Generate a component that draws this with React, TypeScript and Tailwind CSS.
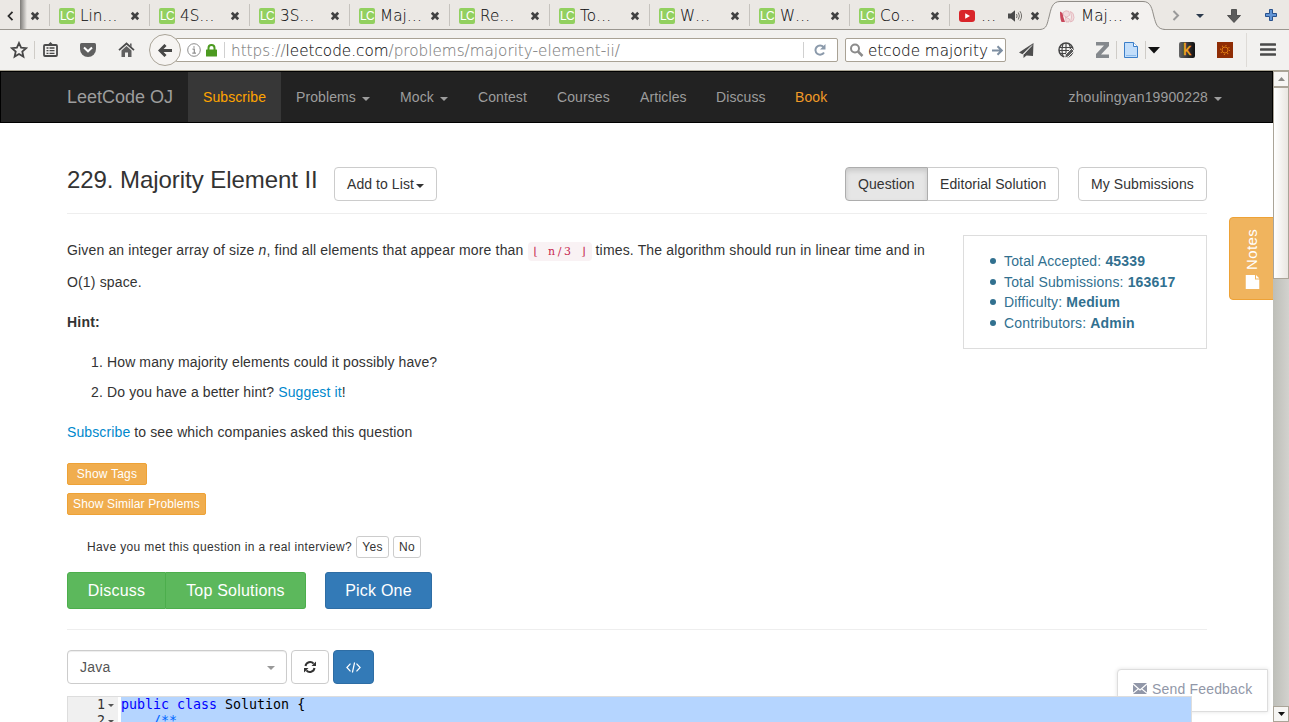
import React from "react";

const CHROME_TEXT = "font-['DejaVu_Sans_Light','DejaVu_Sans',sans-serif] text-[15.22px] font-extralight text-[#111] [-webkit-text-stroke:0.1px]";

function CloseMark() {
  return (
    <svg width="10" height="10" viewBox="0 0 10 10" className="shrink-0">
      <path d="M1.8 1.8 8.2 8.2M8.2 1.8 1.8 8.2" stroke="#414141" strokeWidth="2.7" />
    </svg>
  );
}

function Favicon() {
  return (
    <span className="flex h-4 w-4 shrink-0 items-center justify-center rounded-[2px] bg-[#92d05f] font-['Liberation_Sans',sans-serif] text-[12px] leading-4 tracking-[-0.6px] text-white">
      LC
    </span>
  );
}

function Tab({ title }: { title: string }) {
  return (
    <div className="flex h-[29px] w-[100px] shrink-0 items-center pt-[3px]">
      <span className="-mt-[2px] h-[22px] w-px bg-[#c6c3be]" />
      <span className="ml-[9px]"><Favicon /></span>
      <span className={`ml-[5px] w-[50px] whitespace-nowrap leading-5 ${CHROME_TEXT}`}>{title}</span>
      <CloseMark />
    </div>
  );
}

function Caret({ className = "" }: { className?: string }) {
  return (
    <svg width="8" height="4" viewBox="0 0 8 4" className={`inline-block shrink-0 ${className}`}>
      <path d="M0 0h8L4 4z" fill="currentColor" />
    </svg>
  );
}

function TabStrip() {
  return (
    <div className="relative flex h-[30px] border-b border-[#9a968f] bg-[#ebe8e4]">
      <div className="flex w-[49px] shrink-0 items-center pt-[3px]">
        <svg width="7" height="10" viewBox="0 0 7 10" className="ml-[7px]">
          <path d="M5.5 .8 1.5 5l4 4.2" fill="none" stroke="#2b2b2b" strokeWidth="1.8" />
        </svg>
        <span className="-mt-[3px] ml-[6px] h-[29px] w-[7px] bg-gradient-to-r from-[#7d7b78] to-[#ebe8e4]" />
        <span className="ml-[3px]"><CloseMark /></span>
      </div>
      {["Lin…", "4S…", "3S…", "Maj…", "Re…", "To…", "W…", "W…", "Co…"].map((t, i) => (
        <Tab key={i} title={t} />
      ))}
      <div className="flex w-[91px] shrink-0 items-center pt-[3px]">
        <span className="-mt-[2px] h-[22px] w-px bg-[#c6c3be]" />
        <svg width="16" height="12" viewBox="0 0 16 12" className="ml-[9px]">
          <rect width="16" height="12" rx="3" fill="#d9252a" />
          <path d="M6.2 3.3v5.4L11 6z" fill="#fff" />
        </svg>
        <span className={`ml-[6px] w-[27px] leading-5 ${CHROME_TEXT}`}>…</span>
        <svg width="15" height="12" viewBox="0 0 15 12">
          <path d="M0 3.5h3L7 .3v11.4L3 8.500H0z" fill="#4a4a4a" />
          <path d="M8.500 4q1.200 2 0 4M10.300 2.500q2.200 3.500 0 7M12 1.200q3.100 4.800 0 9.600" fill="none" stroke="#6f6d69" />
        </svg>
        <span className="ml-[7px]"><CloseMark /></span>
      </div>
      <div className="relative flex w-[125px] shrink-0">
        <svg width="125" height="30" viewBox="0 0 125 30" className="absolute left-0 top-0">
          <path d="M0 30V29.500C7 29 7 24 9 17C11 9 12 1.500 20 1.500H103C111 1.500 112 9 114 17C116 24 117 29 125 29.500V30z" fill="#f3f1ef" />
          <path d="M0 29.500C7 29 7 24 9 17C11 9 12 1.500 20 1.500H103C111 1.500 112 9 114 17C116 24 117 29 125 29.500" fill="none" stroke="#8f8c87" />
        </svg>
        <div className="relative flex items-center pt-[3px] pl-[20px]">
          <svg width="15" height="13" viewBox="0 0 15 13">
            <path d="M0 1.500 2.500 3l.8 4L5 12H1.500Q0 9 0 1.500z" fill="#c9475b" />
            <path d="M3 2.500Q6-.5 9 1.500l.5 4-3 1.500-3-1.500zM5.500 7l4 2-.5 3H6zM10.500 1.500q3.500 1 3.500 6 0 4-3.500 4.500l1-5z" fill="#f1dcde" stroke="#dfa9b0" strokeWidth=".7" />
          </svg>
          <span className={`ml-[6px] w-[49px] whitespace-nowrap leading-5 ${CHROME_TEXT}`}>Maj…</span>
          <CloseMark />
        </div>
      </div>
      <div className="flex flex-1 items-center pt-[2px]">
        <svg width="8" height="11" viewBox="0 0 8 11" className="ml-[7px]">
          <path d="M1.500 1 6 5.500 1.500 10" fill="none" stroke="#999" strokeWidth="2" />
        </svg>
        <Caret className="ml-[16px] text-[#2c3a4c]" />
        <svg width="14" height="14" viewBox="0 0 14 14" className="ml-[23px]">
          <path d="M4.500.5h5v6h4L7 13.500.5 6.500h4z" fill="#5c5c5c" stroke="#3f3f3f" strokeWidth=".8" />
        </svg>
        <svg width="12" height="12" viewBox="0 0 12 12" className="-mt-px ml-[24px]">
          <path d="M4.500.5h3v4h4v3h-4v4h-3v-4h-4v-3h4z" fill="#6295d6" stroke="#28518c" />
        </svg>
      </div>
    </div>
  );
}

function Toolbar() {
  return (
    <div className="flex h-[41px] items-center border-b border-[#a9a494] bg-[#f2f1ef]">
      <svg width="18" height="18" viewBox="0 0 18 18" className="ml-[10px]">
        <path d="M9 2l2.100 4.700 5 .5-3.800 3.400 1.100 5L9 13l-4.400 2.600 1.100-5L1.900 7.200l5-.5z" fill="none" stroke="#474747" strokeWidth="1.800" />
      </svg>
      <span className="ml-[6px] h-[18px] w-px bg-[#cfccc7]" />
      <svg width="15" height="15" viewBox="0 0 15 15" className="-mt-px ml-[8px]">
        <rect x="1" y="3" width="13" height="11" rx="1" fill="none" stroke="#4a4a4a" strokeWidth="1.800" />
        <path d="M4 3.500 7.500 0 11 3.500z" fill="#4a4a4a" />
        <path d="M3.500 6h2M6.500 6h5M3.500 8.700h2M6.500 8.700h5M3.500 11.400h2M6.500 11.400h5" stroke="#4a4a4a" strokeWidth="1.300" />
      </svg>
      <svg width="16" height="14" viewBox="0 0 16 14" className="ml-[22px]">
        <path d="M1.500 0h13Q16 0 16 1.500V6a8 8 0 0 1-16 0V1.500Q0 0 1.500 0z" fill="#606060" />
        <path d="M4 4.500 8 8.300l4-3.800" fill="none" stroke="#fff" strokeWidth="2" />
      </svg>
      <svg width="17" height="15" viewBox="0 0 17 15" className="-mt-px ml-[22px]">
        <path d="M1 8.200 8.500 1.500 16 8.200" fill="none" stroke="#4a4a4a" strokeWidth="1.700" />
        <path d="M3.500 8.500 8.500 4l5 4.500V15h-3.500v-4.500h-3V15H3.500zM12 1.500h1.600V5L12 3.500z" fill="#606060" />
      </svg>
      <div className="z-10 ml-[14px] flex h-8 w-8 shrink-0 items-center justify-center rounded-full border border-[#aaa498] bg-[#f6f4f2]">
        <svg width="14" height="13" viewBox="0 0 14 13">
          <path d="M7.500 1 2 6.500 7.500 12M2.500 6.500H14" fill="none" stroke="#474747" strokeWidth="3" />
        </svg>
      </div>
      <div className="-ml-[5px] flex h-6 w-[662px] items-center rounded-r-[2px] border border-[#a9a295] bg-white">
        <svg width="14" height="14" viewBox="0 0 14 14" className="ml-[10px]">
          <circle cx="7" cy="7" r="6.300" fill="none" stroke="#8d8d8d" />
          <path d="M7 3.200v1.600M5.500 6.200H7.300v4M5.300 10.200h3.700" fill="none" stroke="#8d8d8d" strokeWidth="1.200" />
        </svg>
        <svg width="11" height="13" viewBox="0 0 11 13" className="ml-[5px]">
          <path d="M2.500 7V4a3 3 0 0 1 6 0v3" fill="none" stroke="#4c9a20" strokeWidth="2" />
          <rect y="5.500" width="11" height="7" rx=".5" fill="#4c9a20" />
        </svg>
        <span className="ml-[7px] h-4 w-px bg-[#d0d0d0]" />
        <span className={`ml-[6px] flex-1 whitespace-nowrap pt-px leading-5 ${CHROME_TEXT}`}>
          <span className="text-[#7d7d7d]">https://</span>leetcode.com<span className="text-[#7d7d7d]">/problems/majority-element-ii/</span>
        </span>
        <span className="h-4 w-px bg-[#d0d0d0]" />
        <svg width="12" height="12" viewBox="0 0 12 12" className="ml-[10px] mr-[11px]">
          <path d="M9.500 3A4.600 4.600 0 1 0 10 8.500" fill="none" stroke="#8b9aab" strokeWidth="2" />
          <path d="M11.500 0v5.500H6z" fill="#8b9aab" />
        </svg>
      </div>
      <div className="ml-[7px] flex h-6 w-[161px] shrink-0 items-center rounded-[2px] border border-[#a9a295] bg-white">
        <svg width="15" height="14" viewBox="0 0 15 14" className="ml-[3px]">
          <circle cx="6" cy="5.500" r="4" fill="none" stroke="#8b8b8b" strokeWidth="2" />
          <path d="M9 8.500 13.500 13" stroke="#8b8b8b" strokeWidth="2.500" />
        </svg>
        <span className={`ml-[4px] w-[120px] whitespace-nowrap pt-px leading-5 ${CHROME_TEXT}`}>etcode majority</span>
        <svg width="11" height="11" viewBox="0 0 11 11" className="ml-[4px]">
          <path d="M0 5.500h9M5.500 1.200 9.800 5.500 5.500 9.800" fill="none" stroke="#7d8ea1" strokeWidth="2" />
        </svg>
      </div>
      <svg width="15" height="15" viewBox="0 0 15 15" className="ml-[13px]">
        <path d="M14.500 0 0 9.500l3.500 1.700zM14.500 0 4.500 11.500V15l3-2.500L14 13z" fill="#4e4e4e" />
        <path d="M13 2.500 4.500 11.500" stroke="#ddd" />
      </svg>
      <svg width="16" height="16" viewBox="0 0 16 16" className="ml-[24px]">
        <circle cx="8" cy="8" r="7" fill="none" stroke="#444" strokeWidth="1.500" />
        <path d="M1 5.500h14M1 8.500h12M2 11.500h9M5 2q-2 6 0 12M8 1v13M11 2q2 3 1.500 7" fill="none" stroke="#444" strokeWidth="1.100" />
        <path d="M6.500 16 7.500 12.500 13.500 6.500 16 9 10 15z" fill="#5a5a5a" stroke="#f2f1ef" strokeWidth="1" />
      </svg>
      <svg width="13" height="16" viewBox="0 0 13 16" className="ml-[22px]">
        <path d="M0 0h13v4L5 12.500h8V16H0v-4L8 3.500H0z" fill="#85898d" />
      </svg>
      <span className="ml-[7px] h-[18px] w-px bg-[#cfccc7]" />
      <svg width="14" height="16" viewBox="0 0 14 16" className="ml-[7px]">
        <path d="M.5.5h9l4 4v11H.5z" fill="#c3defa" stroke="#3c7fc9" />
        <path d="M9.500.5v4h4" fill="#fff" stroke="#3c7fc9" />
        <path d="M2 13.500h10" stroke="#8dbcec" strokeWidth="1" />
      </svg>
      <span className="ml-[7px] h-[18px] w-px bg-[#cfccc7]" />
      <svg width="12" height="7" viewBox="0 0 12 7" className="ml-[2px]"><path d="M0 0h12L6 6.500z" fill="#111" /></svg>
      <span className="ml-[19px] flex h-4 w-4 items-center justify-center rounded-[2px] bg-gradient-to-r from-[#666] to-[#111] font-['Liberation_Sans',sans-serif] text-[16px] leading-4 text-[#f7a61c] [-webkit-text-stroke:0.3px]">k</span>
      <svg width="16" height="16" viewBox="0 0 16 16" className="ml-[22px]">
        <rect width="16" height="16" fill="#8f2d05" />
        <circle cx="8" cy="8" r="3" fill="none" stroke="#e88514" strokeWidth=".9" />
        <circle cx="8" cy="8" r="4.500" fill="none" stroke="#e88514" strokeWidth="1.100" strokeDasharray="1 2.530" />
      </svg>
      <span className="ml-[13px] h-[34px] w-px bg-[#dedbd7]" />
      <svg width="16" height="13" viewBox="0 0 16 13" className="-mt-px ml-[13px]">
        <path d="M1 1.500h14M1 6.500h14M1 11.500h14" stroke="#4a4a4a" strokeWidth="2.600" strokeLinecap="round" />
      </svg>
    </div>
  );
}

function NavItem({ label, width, caret, active, accent }: { label: string; width: string; caret?: boolean; active?: boolean; accent?: string }) {
  return (
    <a className={`flex h-[50px] items-center pl-[15px] ${width} ${active ? "bg-[#373737]" : ""} ${accent ?? "text-[#9d9d9d]"}`}>
      {label}
      {caret && <Caret className="mt-[3px] ml-[6px]" />}
    </a>
  );
}

function Nav() {
  return (
    <nav className="flex h-[52px] shrink-0 border border-black bg-[#222] text-[14px] tracking-[0.09px]">
      <span className="w-[187px] pl-[66px] text-[18px] leading-[50px] tracking-normal text-[#9d9d9d]">LeetCode OJ</span>
      <NavItem label="Subscribe" width="w-[93px]" active accent="text-[#ffa500]" />
      <NavItem label="Problems" width="w-[104px]" caret />
      <NavItem label="Mock" width="w-[78px]" caret />
      <NavItem label="Contest" width="w-[79px]" />
      <NavItem label="Courses" width="w-[83px]" />
      <NavItem label="Articles" width="w-[76px]" />
      <NavItem label="Discuss" width="w-[79px]" />
      <NavItem label="Book" width="w-[62px]" accent="text-[#f09a27]" />
      <span className="ml-auto flex items-center pr-[50px] tracking-[0.13px] text-[#9d9d9d]">
        zhoulingyan19900228
        <Caret className="mt-[3px] ml-[6px]" />
      </span>
    </nav>
  );
}

function CodeLine({ n, children }: { n: number; children: React.ReactNode }) {
  return (
    <div className="flex h-4">
      <span className="flex w-[50px] shrink-0 items-center justify-end bg-[#f0f0f0] pr-[4px] text-[#333]">
        {n}
        <svg width="6" height="3" viewBox="0 0 6 3" className="ml-[3px]"><path d="M0 0h6L3 3z" fill="#555" /></svg>
      </span>
      <span className="w-[3px] shrink-0 bg-white" />
      <span className="flex-1 whitespace-pre bg-[#b5d5ff] text-black">{children}</span>
    </div>
  );
}

const BTN = "flex h-[34px] items-center border border-[#ccc] bg-white";

function Problem() {
  return (
    <main className="relative ml-[67px] w-[1140px] flex-1 text-[14px] tracking-[0.07px] text-[#333]">
      <div className="mt-[44px] flex h-[47px] border-b border-[#eee]">
        <h1 className="w-[267px] pt-[1px] text-[24px] leading-6 tracking-[-0.06px]">229. Majority Element II</h1>
        <button className={`${BTN} w-[103px] rounded-[4px] pt-px pl-3`}>
          Add to List<Caret className="ml-[2px] mt-[2px]" />
        </button>
        <button className="ml-auto flex h-[34px] w-[83px] items-center rounded-l-[4px] border border-[#adadad] bg-[#e6e6e6] pt-px pl-3 shadow-[inset_0_3px_5px_rgba(0,0,0,0.125)]">Question</button>
        <button className={`${BTN} w-[131px] rounded-r-[4px] border-l-0 pt-px pl-3`}>Editorial Solution</button>
        <button className={`${BTN} ml-[19px] w-[129px] rounded-[4px] pt-px pl-3`}>My Submissions</button>
      </div>

      <div className="flex">
        <div className="w-[896px] pt-[20px]">
          <p className="whitespace-nowrap leading-8 tracking-[0.155px]">
            Given an integer array of size <i>n</i>, find all elements that appear more than{" "}
            <code className="inline-flex h-[19px] items-center rounded-[4px] bg-[#f9f2f4] px-1 align-middle font-['DejaVu_Serif','DejaVu_Sans_Mono',serif] text-[11px] leading-[19px] tracking-normal text-[#c7254e]">
              {"⌊ n/3 ⌋".split("").map((c, i) => (
                <span key={i} className="flex w-2 justify-center whitespace-pre">{c}</span>
              ))}
            </code>{" "}
            times. The algorithm should run in linear time and in
            <br />
            O(1) space.
          </p>
          <p className="mt-2 leading-8 font-bold tracking-[0.2px]">Hint:</p>
          <ol className="mt-[9px] list-none leading-[30px] tracking-[0.115px]">
            <li className="pl-[24px]"><span className="inline-block w-4">1.</span>How many majority elements could it possibly have?</li>
            <li className="pl-[24px]"><span className="inline-block w-4">2.</span>Do you have a better hint? <a className="text-[#0088cc]">Suggest it</a>!</li>
          </ol>
          <p className="mt-[9px] leading-8 tracking-[0.115px]"><a className="text-[#0088cc]">Subscribe</a> to see which companies asked this question</p>
        </div>
        <ul className="mt-[21px] flex h-[114px] w-[244px] flex-col border border-[#ddd] pt-[15px] pl-[26px] leading-[20.6px] tracking-[0.16px] text-[#31708f]">
          {[["Total Accepted:", "45339"], ["Total Submissions:", "163617"], ["Difficulty:", "Medium"], ["Contributors:", "Admin"]].map(([k, v]) => (
            <li key={k} className="flex items-center whitespace-pre">
              <span className="mr-[8px] h-[6px] w-[6px] rounded-full bg-[#31708f]" />
              {k} <b>{v}</b>
            </li>
          ))}
        </ul>
      </div>

      <button className="mt-[15px] block h-[22px] w-[80px] rounded-[2px] border border-[#eea236] bg-[#f0ad4e] text-[12px] leading-5 tracking-[0.2px] text-white">Show Tags</button>
      <button className="mt-2 block h-[22px] w-[139px] rounded-[2px] border border-[#eea236] bg-[#f0ad4e] text-[12px] leading-5 tracking-[0.13px] whitespace-nowrap text-white">Show Similar Problems</button>
      <div className="mt-[21px] flex h-[22px] items-center pl-5 text-[12px] tracking-[0.36px]">
        <span className="w-[269px] whitespace-nowrap">Have you met this question in a real interview?</span>
        <button className="h-[22px] w-[33px] rounded-[3px] border border-[#ccc] leading-5">Yes</button>
        <button className="ml-1 h-[22px] w-[28px] rounded-[3px] border border-[#ccc] leading-5">No</button>
      </div>
      <div className="mt-[14px] flex text-[16px] tracking-[0.2px] text-white">
        <button className="h-[37px] w-[99px] rounded-l-[3px] border border-[#4cae4c] bg-[#5cb85c]">Discuss</button>
        <button className="h-[37px] w-[140px] rounded-r-[3px] border border-l-0 border-[#4cae4c] bg-[#5cb85c]">Top Solutions</button>
        <button className="ml-[19px] h-[37px] w-[107px] rounded-[3px] border border-[#2e6da4] bg-[#337ab7]">Pick One</button>
      </div>
      <hr className="mt-5 border-[#eee]" />
      <div className="mt-5 flex">
        <div className="flex h-[34px] w-[220px] items-center rounded-[4px] border border-[#ccc] pt-px pr-[11px] pl-3 tracking-[0.2px] text-[#555] shadow-[inset_0_1px_1px_rgba(0,0,0,0.075)]">
          Java
          <Caret className="ml-auto text-[#999]" />
        </div>
        <button className="ml-1 flex h-[34px] w-[38px] items-center justify-center rounded-[4px] border border-[#ccc]">
          <svg width="12" height="12" viewBox="0 0 12 12">
            <path d="M1.500 5A4.700 4.700 0 0 1 9.600 2.600M10.500 7A4.700 4.700 0 0 1 2.400 9.400" fill="none" stroke="#333" strokeWidth="2" />
            <path d="M12 .5V5H7.500zM0 11.500V7h4.500z" fill="#333" />
          </svg>
        </button>
        <button className="ml-1 flex h-[34px] w-[41px] items-center justify-center rounded-[4px] border border-[#2e6da4] bg-[#337ab7]">
          <svg width="15" height="11" viewBox="0 0 15 11">
            <path d="M4.500 1.700.9 5.500l3.600 3.800M10.500 1.700l3.600 3.800-3.600 3.800M8.600.5 6.400 10.500" fill="none" stroke="#fff" strokeWidth="1.200" />
          </svg>
        </button>
      </div>
      <div className="relative z-20 mt-3 h-[26px] w-[1125px] overflow-hidden border-t border-r border-l border-[#ddd] bg-white font-['DejaVu_Sans_Mono',monospace] text-[13.3px] leading-4 tracking-normal">
        <CodeLine n={1}><span className="text-[#0000ff]">public class</span> Solution {"{"}</CodeLine>
        <CodeLine n={2}><span className="text-[#0066ff]">{"    /**"}</span></CodeLine>
      </div>
    </main>
  );
}

function ScrollBar() {
  return (
    <div className="flex w-4 flex-col bg-gradient-to-r from-[#bdbeb8] to-[#d2d2ce]">
      <div className="flex h-4 items-center justify-center border border-[#aaa498] bg-[#f6f5f3]">
        <svg width="7" height="4" viewBox="0 0 7 4"><path d="M0 4h7L3.500 0z" fill="#8a8a86" /></svg>
      </div>
      <div className="h-[192px] border border-[#aaa498] bg-gradient-to-r from-white to-[#e9e6e1]" />
      <div className="mt-auto flex h-4 items-center justify-center border border-[#aaa498] bg-[#f6f5f3]">
        <svg width="7" height="4" viewBox="0 0 7 4"><path d="M0 0h7L3.500 4z" fill="#111" /></svg>
      </div>
    </div>
  );
}

export default function App() {
  return (
    <div className="flex h-[722px] w-[1289px] flex-col overflow-hidden bg-white font-['Liberation_Sans',Arial,sans-serif]">
      <TabStrip />
      <Toolbar />
      <div className="flex h-[651px]">
        <div className="relative flex w-[1273px] flex-col overflow-hidden">
          <Nav />
          <Problem />
          <div className="absolute top-[146px] left-[1229px] flex h-[83px] w-[45px] items-center justify-center rounded-l-[4px] border border-[#eea236] bg-[#f0b45e] pl-[2px]">
            <div className="flex h-[61px] rotate-180 items-center gap-[5px] text-[15px] tracking-[0.4px] text-white [writing-mode:vertical-rl]">
              <span className="order-2">Notes</span>
              <svg width="14" height="14" viewBox="0 0 14 14" className="order-1 rotate-180">
                <path d="M0 0h9.500v4.500H14V14H0zM10.500 0 14 3.500h-3.500z" fill="#fff" />
              </svg>
            </div>
          </div>
          <div className="absolute top-[598px] left-[1117px] flex h-[43px] w-[151px] items-center rounded-tl-[4px] border border-[#ddd] bg-white pb-[2px] pl-[15px] text-[14px] tracking-[0.18px] text-[#9197a8] shadow-[0_0_4px_rgba(0,0,0,0.12)]">
            <svg width="14" height="11" viewBox="0 0 14 11" className="mr-[5px] -mt-[2px]">
              <path d="M0 0h14L7 6.200zM0 1.700 4.600 5.700 0 9.600zM14 1.700 9.400 5.700 14 9.600zM0 11 5.400 6.500 7 7.800 8.600 6.500 14 11z" fill="#9197a8" />
            </svg>
            Send Feedback
          </div>
        </div>
        <ScrollBar />
      </div>
    </div>
  );
}
